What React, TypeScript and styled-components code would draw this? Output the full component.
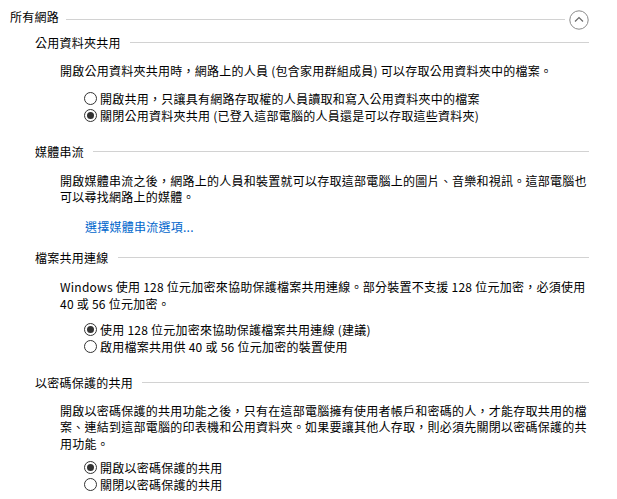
import type { FC, ReactNode } from 'react'
import styled, { createGlobalStyle } from 'styled-components'

const GlobalStyle = createGlobalStyle`
  html, body {
    margin: 0;
    padding: 0;
    background: #fff;
  }
  body {
    font-family: "Noto Sans CJK TC", "Noto Sans", sans-serif;
    font-size: 12px;
    color: #000;
  }
`

const Page = styled.div`
  width: 617px;
  box-sizing: border-box;
  padding: 8px 28px 0 10px;
`

const TopHeader = styled.div`
  display: flex;
  align-items: center;
`

const TopTitle = styled.div`
  line-height: 17px;
  padding-bottom: 6px;
  letter-spacing: 0.25px;
`

const Rule = styled.div<{ $gap: number }>`
  flex: 1;
  height: 1px;
  background: #d2d2d2;
  margin-left: ${(p) => p.$gap}px;
`

const CollapseButton = styled.button`
  width: 20px;
  height: 20px;
  margin-left: 4px;
  padding: 0;
  border: none;
  background: none;
  display: flex;
  align-items: center;
  justify-content: center;
`

const Section = styled.section<{ $top: number }>`
  padding-left: 25px;
  margin-top: ${(p) => p.$top}px;
`

const SectionHeader = styled.div`
  display: flex;
  align-items: center;
  line-height: 17px;
  letter-spacing: 0.25px;
`

const SectionBody = styled.div`
  padding-left: 25px;
`

const Paragraph = styled.p<{ $top: number }>`
  margin: ${(p) => p.$top}px 0 0;
  line-height: 16.7px;
  letter-spacing: 0.25px;
`

const RadioGroup = styled.div<{ $top: number }>`
  margin: ${(p) => p.$top}px 0 0 24px;
  display: flex;
  flex-direction: column;
`

const RadioRow = styled.label`
  display: flex;
  align-items: center;
  height: 17.5px;
  letter-spacing: 0.25px;
`

const RadioCircle = styled.span<{ $checked?: boolean }>`
  width: 13px;
  height: 13px;
  box-sizing: border-box;
  border: 1px solid #333;
  border-radius: 50%;
  margin-right: 3px;
  display: flex;
  align-items: center;
  justify-content: center;
  flex-shrink: 0;

  &::after {
    content: '';
    width: 7px;
    height: 7px;
    border-radius: 50%;
    background: ${(p) => (p.$checked ? '#333' : 'transparent')};
  }
`

const LinkText = styled.a`
  display: block;
  margin: 12px 0 0 25px;
  color: #0066cc;
  line-height: 17px;
  letter-spacing: 0.25px;
  text-decoration: none;
  cursor: pointer;
`

const Radio: FC<{ checked?: boolean; children: ReactNode }> = ({ checked, children }) => (
  <RadioRow>
    <RadioCircle $checked={checked} />
    {children}
  </RadioRow>
)

const sections = [
  {
    title: '公用資料夾共用',
    top: 3,
    textTop: 12,
    radioTop: 10,
    text: ['開啟公用資料夾共用時，網路上的人員 (包含家用群組成員) 可以存取公用資料夾中的檔案。'],
    radios: [
      { label: '開啟共用，只讓具有網路存取權的人員讀取和寫入公用資料夾中的檔案', checked: false },
      { label: '關閉公用資料夾共用 (已登入這部電腦的人員還是可以存取這些資料夾)', checked: true },
    ],
  },
  {
    title: '媒體串流',
    top: 18,
    textTop: 13,
    radioTop: 0,
    text: [
      '開啟媒體串流之後，網路上的人員和裝置就可以存取這部電腦上的圖片、音樂和視訊。這部電腦也',
      '可以尋找網路上的媒體。',
    ],
    link: '選擇媒體串流選項...',
  },
  {
    title: '檔案共用連線',
    top: 14,
    textTop: 13,
    radioTop: 8,
    text: [
      'Windows 使用 128 位元加密來協助保護檔案共用連線。部分裝置不支援 128 位元加密，必須使用',
      '40 或 56 位元加密。',
    ],
    radios: [
      { label: '使用 128 位元加密來協助保護檔案共用連線 (建議)', checked: true },
      { label: '啟用檔案共用供 40 或 56 位元加密的裝置使用', checked: false },
    ],
  },
  {
    title: '以密碼保護的共用',
    top: 18,
    textTop: 12,
    radioTop: 6,
    text: [
      '開啟以密碼保護的共用功能之後，只有在這部電腦擁有使用者帳戶和密碼的人，才能存取共用的檔',
      '案、連結到這部電腦的印表機和公用資料夾。如果要讓其他人存取，則必須先關閉以密碼保護的共',
      '用功能。',
    ],
    radios: [
      { label: '開啟以密碼保護的共用', checked: true },
      { label: '關閉以密碼保護的共用', checked: false },
    ],
  },
]

const App: FC = () => {
  return (
    <>
      <GlobalStyle />
      <Page>
        <TopHeader>
          <TopTitle>所有網路</TopTitle>
          <Rule $gap={7} />
          <CollapseButton aria-label="摺疊">
            <svg width="20" height="20" viewBox="0 0 20 20">
              <circle cx="10" cy="10" r="9.2" fill="none" stroke="#8a8a8a" strokeWidth="1" />
              <path d="M6 11.5 L10 7.5 L14 11.5" fill="none" stroke="#6a6a6a" strokeWidth="1.2" />
            </svg>
          </CollapseButton>
        </TopHeader>

        {sections.map((s) => (
          <Section key={s.title} $top={s.top}>
            <SectionHeader>
              <span>{s.title}</span>
              <Rule $gap={9} />
            </SectionHeader>
            <SectionBody>
              <Paragraph $top={s.textTop}>
                {s.text.map((line, i) => (
                  <span key={i}>
                    {i > 0 && <br />}
                    {line}
                  </span>
                ))}
              </Paragraph>
              {s.link && <LinkText>{s.link}</LinkText>}
              {s.radios && (
                <RadioGroup $top={s.radioTop}>
                  {s.radios.map((r) => (
                    <Radio key={r.label} checked={r.checked}>
                      {r.label}
                    </Radio>
                  ))}
                </RadioGroup>
              )}
            </SectionBody>
          </Section>
        ))}
      </Page>
    </>
  )
}

export default App
